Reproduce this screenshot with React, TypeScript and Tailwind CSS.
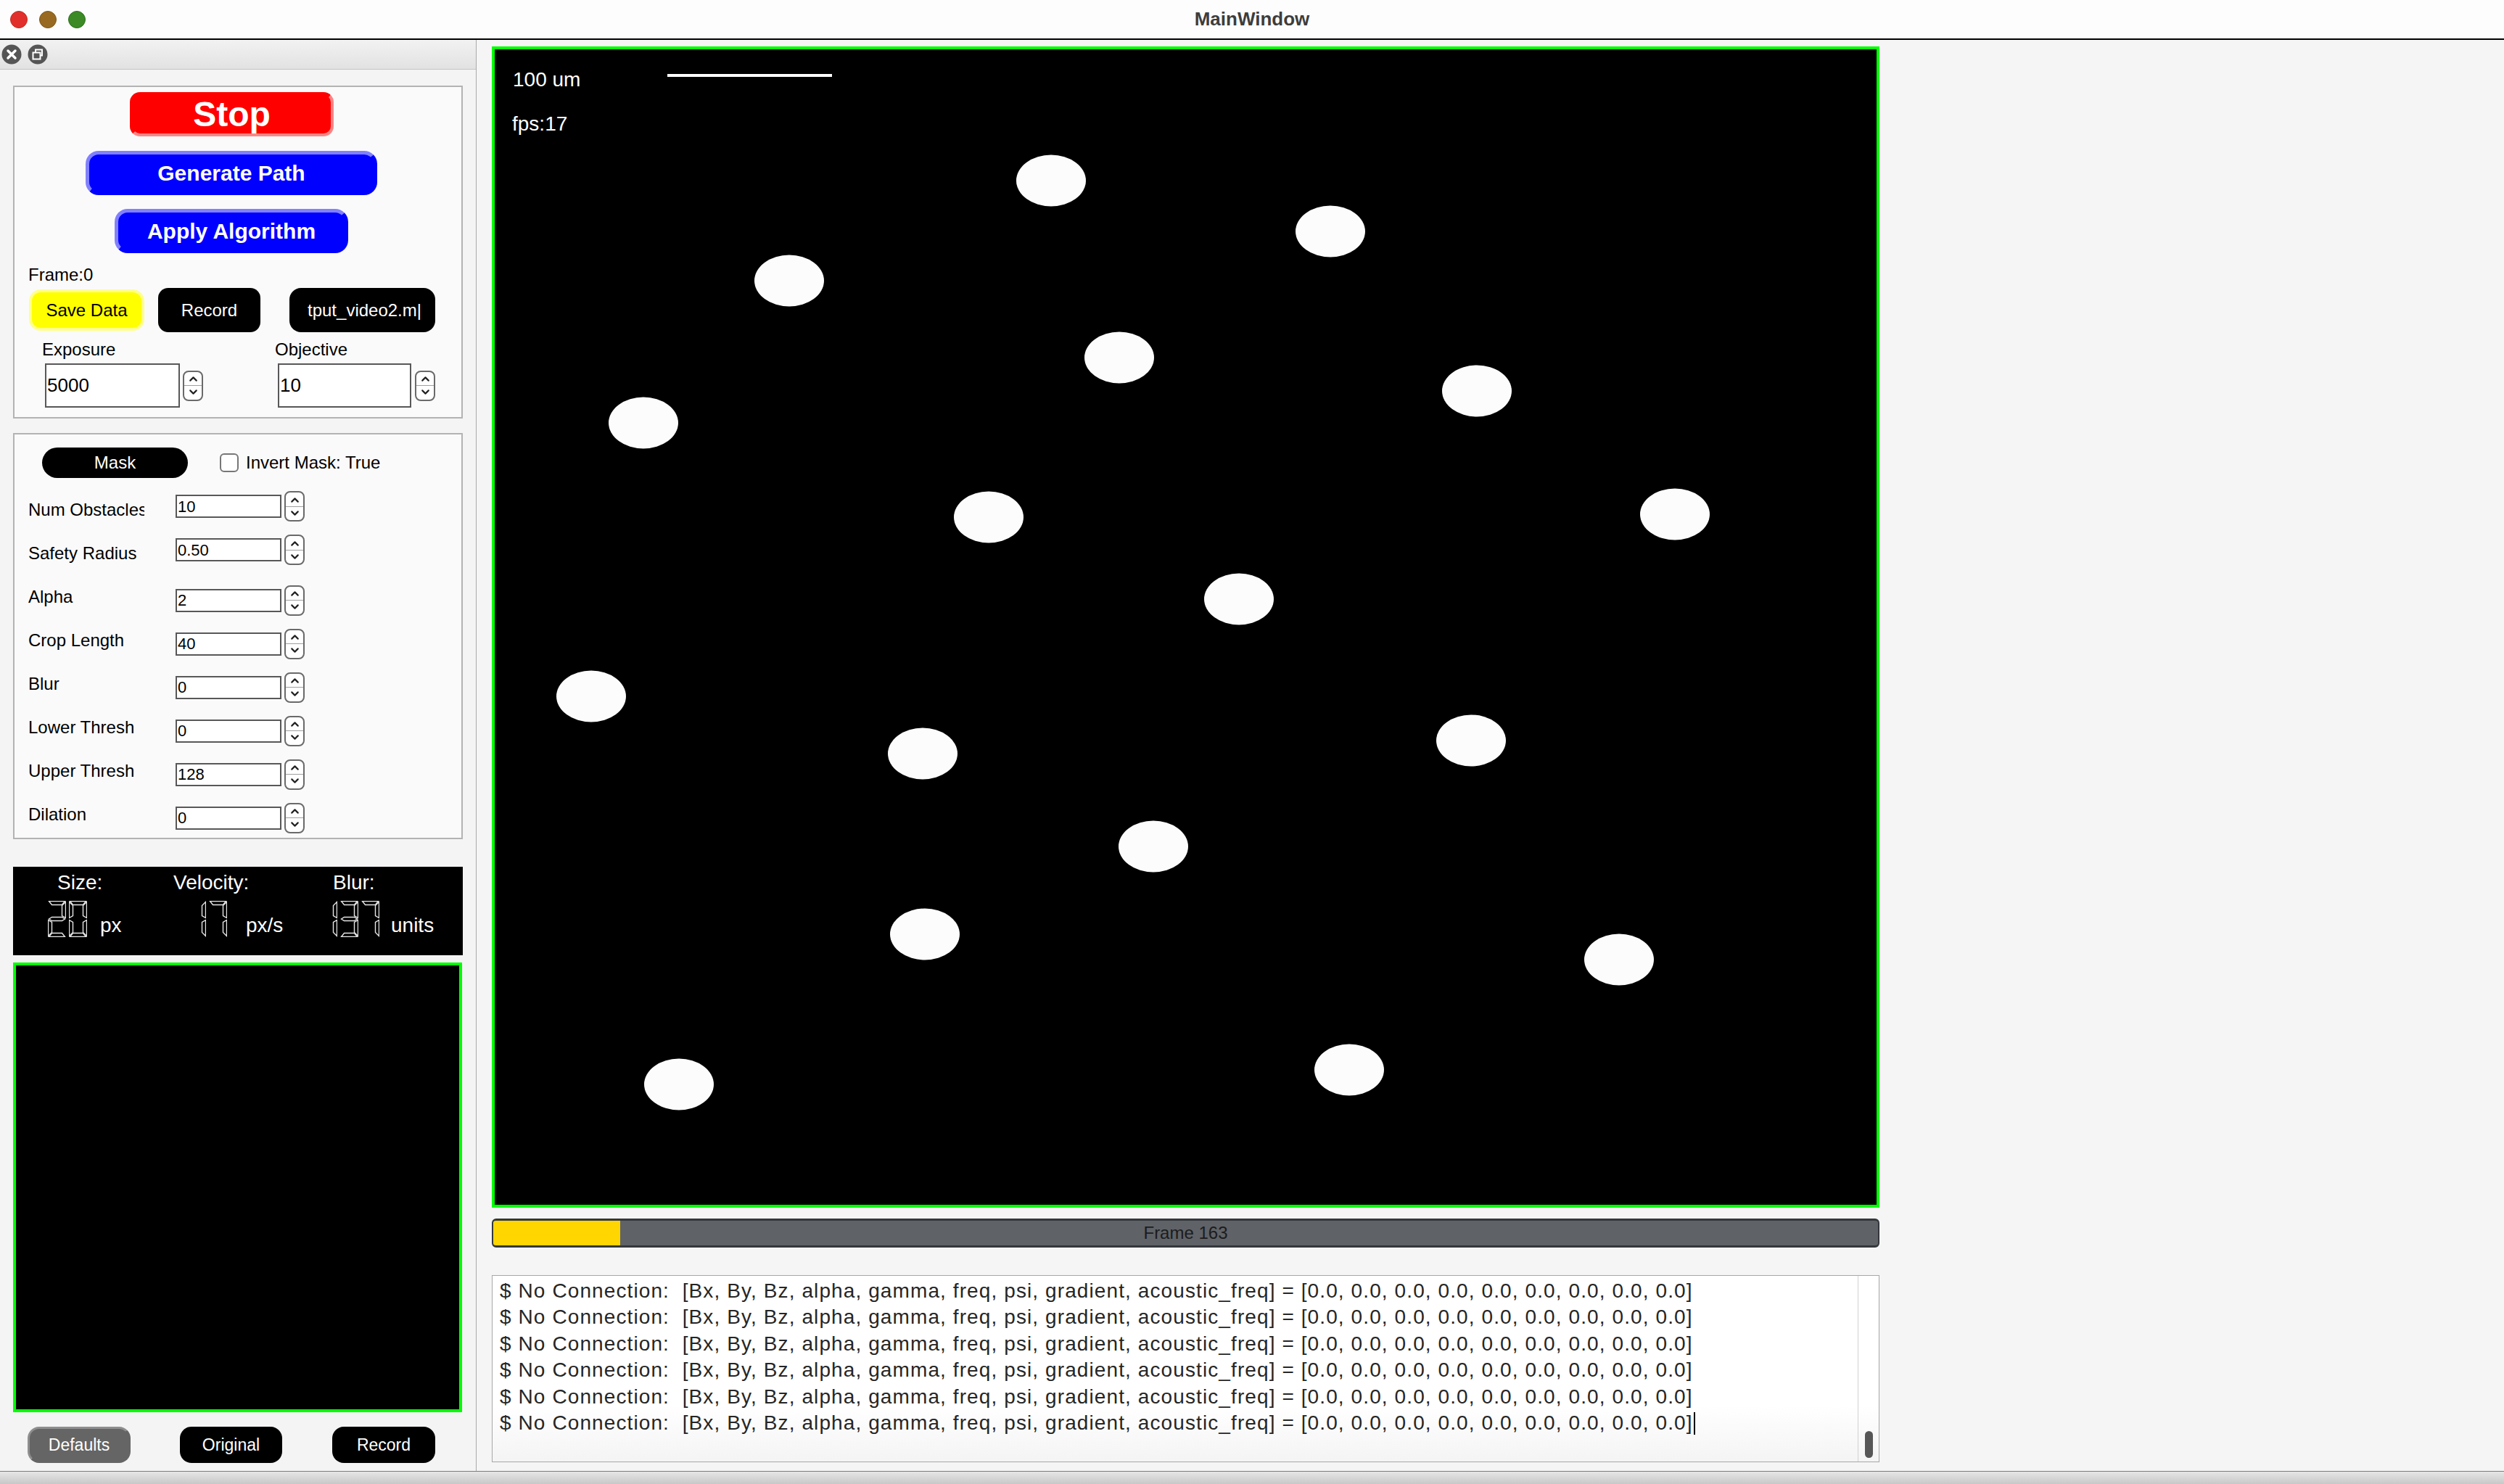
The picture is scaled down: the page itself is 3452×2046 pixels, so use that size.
import { ChevronDown, ChevronUp } from "lucide-react";

const SEG: Record<string, string> = {
  a: "1,0 23,0 19,5 5,5",
  b: "24,1 24,23 19,20 19,6",
  c: "24,26 24,48 19,43 19,29",
  d: "1,49 23,49 19,44 5,44",
  e: "0,26 0,48 5,43 5,29",
  f: "0,1 0,23 5,20 5,6",
  g: "1,24.5 5,22 19,22 23,24.5 19,27 5,27",
};

const DIGITS: Record<string, string> = {
  "0": "abcdef",
  "1": "bc",
  "2": "abged",
  "3": "abgcd",
  "7": "abc",
};

// obstacle blobs on the camera frame (outer-box coords)
const dots = [
  [771, 185], [1156, 255], [410, 323], [865, 429], [1358, 475], [209, 519],
  [685, 649], [1631, 645], [1030, 762], [137, 896], [594, 975], [1350, 957],
  [912, 1103], [597, 1224], [1554, 1259], [1182, 1411], [258, 1431],
];

const params = [
  { label: "Num Obstacles", value: "10", lift: true },
  { label: "Safety Radius", value: "0.50", lift: true },
  { label: "Alpha", value: "2", lift: false },
  { label: "Crop Length", value: "40", lift: false },
  { label: "Blur", value: "0", lift: false },
  { label: "Lower Thresh", value: "0", lift: false },
  { label: "Upper Thresh", value: "128", lift: false },
  { label: "Dilation", value: "0", lift: false },
];

const logLine =
  "$ No Connection:  [Bx, By, Bz, alpha, gamma, freq, psi, gradient, acoustic_freq] = [0.0, 0.0, 0.0, 0.0, 0.0, 0.0, 0.0, 0.0, 0.0]";

function Lcd({ value }: { value: string }) {
  return (
    <div className="flex gap-[4px]">
      {value.split("").map((d, i) => (
        <svg key={i} width="25" height="50" viewBox="-0.5 -0.5 25 50">
          {DIGITS[d].split("").map((s) => (
            <polygon key={s} points={SEG[s]} fill="none" stroke="#e6e6e6" strokeWidth="1.4" />
          ))}
        </svg>
      ))}
    </div>
  );
}

function Spin() {
  return (
    <div className="flex h-[42px] w-[28px] flex-col items-center justify-center rounded-[8px] border-2 border-[#6a6a6a] bg-white">
      <ChevronUp className="h-[17px] w-[17px] text-[#222]" strokeWidth={3} />
      <div className="h-px w-full bg-[#a0a0a0]" />
      <ChevronDown className="h-[17px] w-[17px] text-[#222]" strokeWidth={3} />
    </div>
  );
}

export default function App() {
  return (
    <div className="flex h-[2046px] w-[3452px] flex-col overflow-hidden bg-[#f5f5f5] font-['Liberation_Sans',Arial,sans-serif] text-black">
      {/* window title bar */}
      <div className="flex h-[55px] shrink-0 items-center border-b-2 border-black bg-[#fdfdfd]">
        <div className="flex w-[200px] items-center gap-[16px] pl-[14px]">
          <span className="h-[24px] w-[24px] rounded-full border border-[#c4281f] bg-[#e1302b]" />
          <span className="h-[24px] w-[24px] rounded-full border border-[#7d5618] bg-[#986a21]" />
          <span className="h-[24px] w-[24px] rounded-full border border-[#2e6f1c] bg-[#3b8a25]" />
        </div>
        <div className="flex-1 text-center text-[26px] font-bold text-[#3d3d3d]">MainWindow</div>
        <div className="w-[200px]" />
      </div>

      <div className="flex flex-1">
        {/* left dock */}
        <div className="flex w-[657px] shrink-0 flex-col border-r border-[#a9a9a9] bg-[#f4f4f4]">
          <div className="flex h-[41px] items-center gap-[8px] border-b border-[#c3c3c3] bg-gradient-to-b from-[#f2f2f2] to-[#e2e2e2] pl-[2px]">
            <svg width="28" height="28" viewBox="0 0 28 28">
              <circle cx="14" cy="14" r="13.5" fill="#555" />
              <path d="M9 9 L19 19 M19 9 L9 19" stroke="#fff" strokeWidth="3.5" strokeLinecap="round" />
            </svg>
            <svg width="28" height="28" viewBox="0 0 28 28">
              <circle cx="14" cy="14" r="13.5" fill="#555" />
              <rect x="11" y="7.5" width="9" height="8" fill="none" stroke="#fff" strokeWidth="2" />
              <rect x="7.5" y="11.5" width="10" height="9" fill="#555" stroke="#fff" strokeWidth="2" />
            </svg>
          </div>

          {/* camera controls */}
          <div className="ml-[18px] mt-[22px] flex h-[459px] w-[620px] flex-col border-2 border-[#b3b3b3] bg-[#fafafa]">
            <button className="ml-[159px] mt-[7px] flex h-[61px] w-[281px] items-center justify-center rounded-[14px] border-[4px] border-[#ff0000] border-b-[#ff8585] border-r-[#ff8585] bg-[#ff0000] text-[48px] font-bold text-white">
              Stop
            </button>
            <button className="ml-[98px] mt-[20px] flex h-[61px] w-[402px] items-center justify-center rounded-[18px] border-[5px] border-[#0000ff] border-l-[#8080ff] border-t-[#8080ff] bg-[#0000ff] text-[30px] font-bold text-white">
              Generate Path
            </button>
            <button className="ml-[138px] mt-[19px] flex h-[61px] w-[322px] items-center justify-center rounded-[18px] border-[5px] border-[#0000ff] border-l-[#8080ff] border-t-[#8080ff] bg-[#0000ff] text-[30px] font-bold text-white">
              Apply Algorithm
            </button>
            <div className="ml-[19px] mt-[16px] text-[24px] leading-[28px]">Frame:0</div>
            <div className="mt-[4px] flex h-[61px] items-center">
              <button className="ml-[20px] flex h-[57px] w-[159px] items-center justify-center rounded-[16px] border-4 border-[#ffff8c] bg-[#ffff00] text-[24px]">
                Save Data
              </button>
              <button className="ml-[19px] flex h-[61px] w-[141px] items-center justify-center rounded-[14px] bg-black text-[24px] text-white">
                Record
              </button>
              <button className="ml-[40px] flex h-[61px] w-[201px] items-center justify-center overflow-hidden whitespace-nowrap rounded-[16px] bg-black pl-[6px] text-[24px] text-white">
                tput_video2.m|
              </button>
            </div>
            <div className="mt-[10px] flex">
              <div className="ml-[38px] flex w-[321px] flex-col">
                <span className="text-[24px] leading-[28px]">Exposure</span>
                <div className="mt-[5px] flex items-center gap-[4px] pl-[4px]">
                  <div className="flex h-[61px] w-[186px] items-center border-2 border-[#585858] bg-white pl-[1px] text-[26px]">5000</div>
                  <Spin />
                </div>
              </div>
              <div className="flex flex-col">
                <span className="text-[24px] leading-[28px]">Objective</span>
                <div className="mt-[5px] flex items-center gap-[5px] pl-[4px]">
                  <div className="flex h-[61px] w-[184px] items-center border-2 border-[#585858] bg-white pl-[1px] text-[26px]">10</div>
                  <Spin />
                </div>
              </div>
            </div>
          </div>

          {/* mask parameters */}
          <div className="ml-[18px] mt-[20px] flex h-[560px] w-[620px] flex-col border-2 border-[#b3b3b3] bg-[#fafafa]">
            <div className="mt-[18px] flex h-[42px] items-center">
              <button className="ml-[38px] flex h-[42px] w-[201px] items-center justify-center rounded-full bg-black text-[24px] text-white">
                Mask
              </button>
              <span className="ml-[44px] h-[26px] w-[26px] rounded-[6px] border-2 border-[#777] bg-white" />
              <span className="ml-[10px] text-[24px]">Invert Mask: True</span>
            </div>
            <div className="mt-[14px] flex flex-col">
              {params.map((p) => (
                <div key={p.label} className="flex h-[60px] items-center">
                  <span className="ml-[19px] w-[160px] overflow-hidden whitespace-nowrap text-[24px]">{p.label}</span>
                  <div className={`ml-[43px] flex items-center gap-[4px] ${p.lift ? "mb-[10px]" : "mt-[9px]"}`}>
                    <div className="flex h-[32px] w-[146px] items-center border-2 border-[#585858] bg-white pl-[1px] text-[22px]">
                      {p.value}
                    </div>
                    <Spin />
                  </div>
                </div>
              ))}
            </div>
          </div>

          {/* readouts */}
          <div className="ml-[18px] mt-[38px] flex h-[122px] w-[620px] flex-col bg-black text-[28px] leading-[32px] text-white">
            <div className="mt-[6px] flex pl-[61px]">
              <span className="w-[160px]">Size:</span>
              <span className="w-[220px]">Velocity:</span>
              <span>Blur:</span>
            </div>
            <div className="mt-[9px] flex pl-[48px]">
              <div className="flex w-[193px] items-end">
                <Lcd value="20" />
                <span className="ml-[18px]">px</span>
              </div>
              <div className="flex w-[181px] items-end">
                <Lcd value="17" />
                <span className="ml-[26px]">px/s</span>
              </div>
              <div className="flex items-end">
                <Lcd value="137" />
                <span className="ml-[16px]">units</span>
              </div>
            </div>
          </div>

          <div className="ml-[18px] mt-[10px] h-[620px] w-[619px] border-4 border-[#00ff00] bg-black" />

          <div className="mt-[20px] flex h-[50px] items-center text-[23px] text-white">
            <button className="ml-[38px] flex h-[50px] w-[142px] items-center justify-center rounded-[16px] border-[3px] border-[#8e8e8e] border-b-[#656565] border-r-[#656565] bg-[#656565]">
              Defaults
            </button>
            <button className="ml-[68px] flex h-[50px] w-[141px] items-center justify-center rounded-[16px] bg-black">
              Original
            </button>
            <button className="ml-[69px] flex h-[50px] w-[142px] items-center justify-center rounded-[16px] bg-black">
              Record
            </button>
          </div>
        </div>

        {/* main view */}
        <div className="flex flex-1 flex-col pl-[21px] pt-[9px]">
          <div className="h-[1601px] w-[1913px] border-4 border-[#00ff00] bg-black">
            <svg width="1905" height="1593" viewBox="4 4 1905 1593" className="block">
              <text x="29" y="55" fill="#fff" fontSize="28" fontFamily="Liberation Sans, Arial, sans-serif">100 um</text>
              <rect x="242" y="38" width="227" height="4" fill="#fff" />
              <text x="28" y="116" fill="#fff" fontSize="28" fontFamily="Liberation Sans, Arial, sans-serif">fps:17</text>
              {dots.map(([x, y], i) => (
                <ellipse key={i} cx={x} cy={y} rx="48" ry="35.5" fill="#fcfcfc" />
              ))}
            </svg>
          </div>

          <div className="relative mt-[15px] flex h-[40px] w-[1913px] items-center justify-center overflow-hidden rounded-[6px] border-x-2 border-y-[3px] border-[#34373c] bg-[#5f6267]">
            <div className="absolute inset-y-0 left-0 w-[175px] bg-[#ffd600]" />
            <span className="relative text-[24px] text-[#1c1c1c]">Frame 163</span>
          </div>

          <div className="mt-[38px] flex h-[258px] w-[1913px] border border-[#a7a7a7] bg-gradient-to-b from-white from-70% to-[#f4f4f4]">
            <div className="flex-1 whitespace-pre pl-[10px] pt-[3px] text-[28px] leading-[36.4px] tracking-[1.1px] text-[#262626]">
              {[0, 1, 2, 3, 4].map((i) => (
                <div key={i}>{logLine}</div>
              ))}
              <div className="flex items-center">
                {logLine}
                <span className="ml-[1px] h-[31px] w-[2px] bg-black" />
              </div>
            </div>
            <div className="flex w-[29px] flex-col items-center justify-end border-l border-[#d2d2d2] pb-[5px]">
              <div className="h-[37px] w-[11px] rounded-full bg-[#565656]" />
            </div>
          </div>
        </div>
      </div>

      {/* status bar */}
      <div className="h-[18px] shrink-0 border-t border-[#7b7b7b] bg-gradient-to-b from-[#e6e6e6] to-[#c8c8c8]" />
    </div>
  );
}
